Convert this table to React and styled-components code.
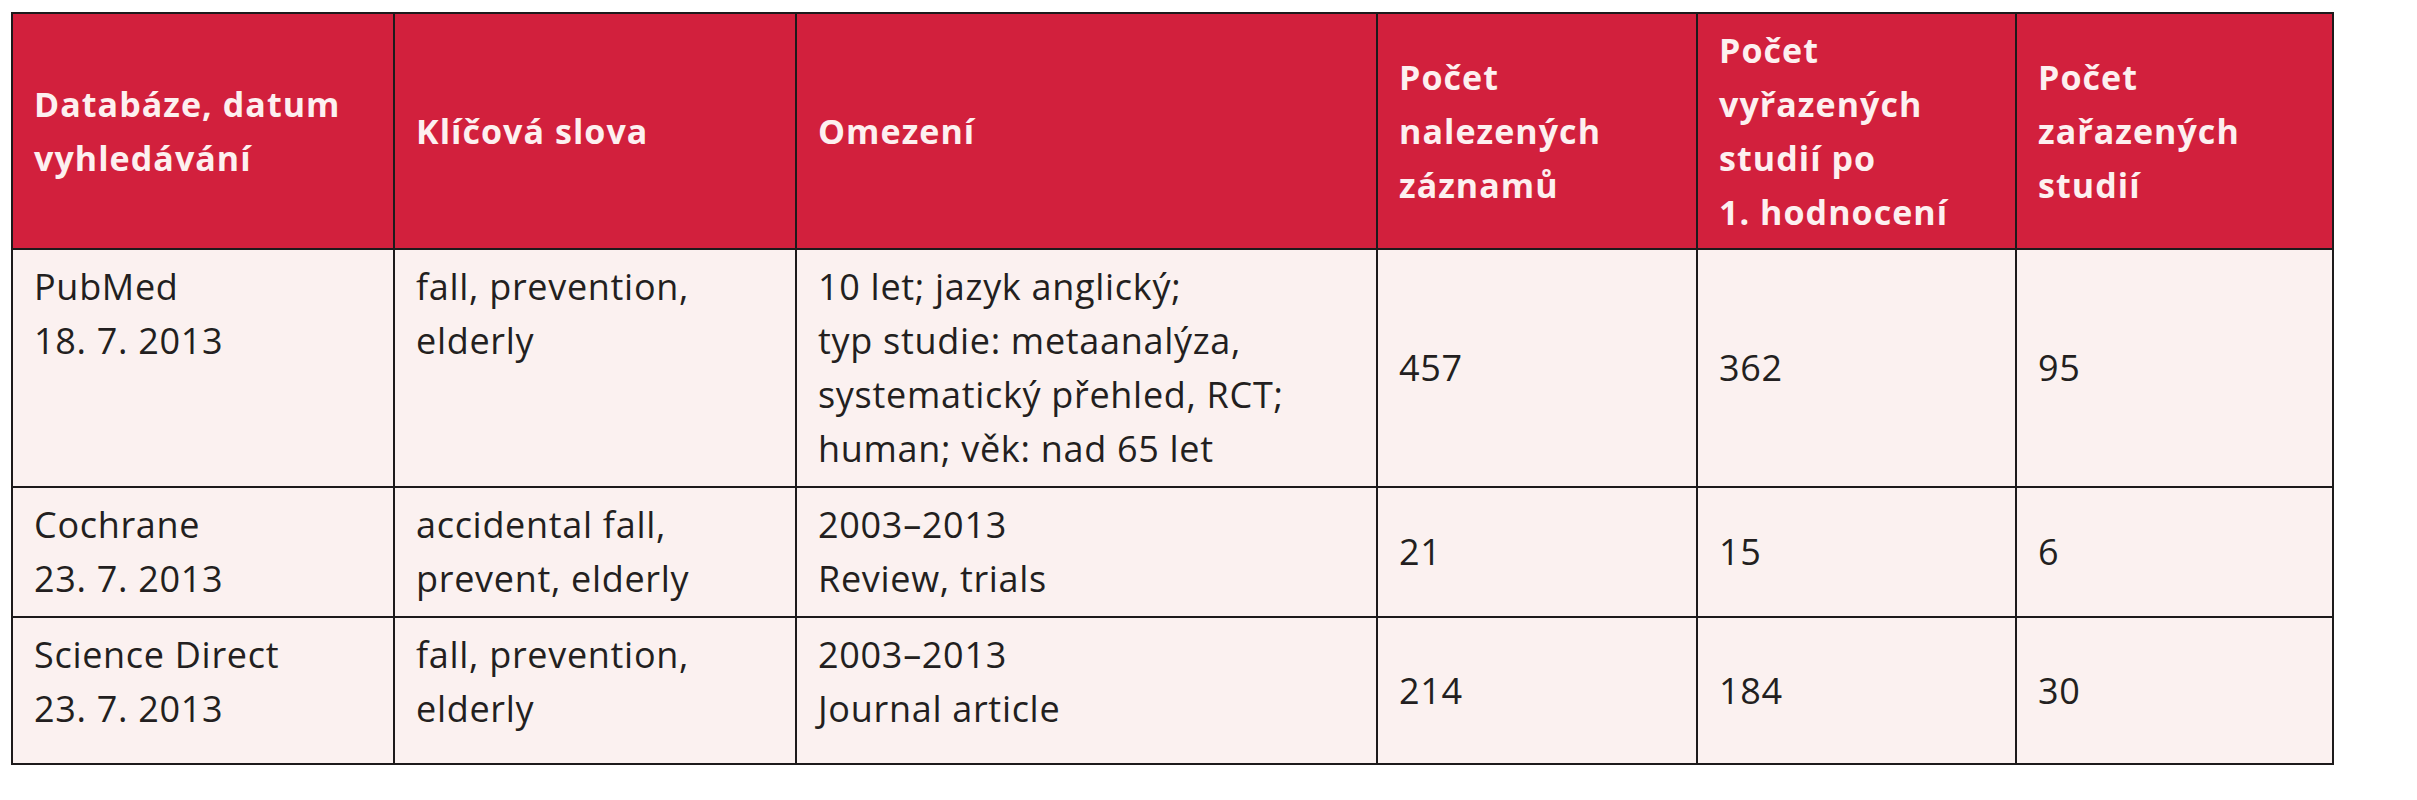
import React from "react";
import styled, { createGlobalStyle } from "styled-components";

const Global = createGlobalStyle`
  html, body {
    margin: 0;
    padding: 0;
    background: #ffffff;
  }
  body {
    font-family: "Open Sans", "Liberation Sans", sans-serif;
  }
`;

const Page = styled.div`
  padding: 12px 0 0 11px;
`;

const Table = styled.table`
  border-collapse: collapse;
  table-layout: fixed;
  width: 2323px;
  border: 2px solid #1d1a1b;
`;

const Row = styled.tr`
  height: ${(p) => p.$h}px;
`;

const HeadCell = styled.th`
  background: #d2203d;
  color: #fdf0f0;
  font-family: "Open Sans", "Liberation Sans", sans-serif;
  font-weight: 700;
  font-size: 34px;
  line-height: 54px;
  letter-spacing: 1.05px;
  text-align: left;
  vertical-align: middle;
  padding: 0 16px 0 21px;
  border: 2px solid #1d1a1b;
  white-space: nowrap;
`;

const Cell = styled.td`
  background: #fbf1f0;
  color: #231f20;
  font-family: "Open Sans", "Liberation Sans", sans-serif;
  font-weight: 400;
  font-size: 36px;
  line-height: 54px;
  letter-spacing: 0.7px;
  text-align: left;
  vertical-align: ${(p) => (p.$mid ? "middle" : "top")};
  padding: 10px 16px 10px 21px;
  border: 2px solid #1d1a1b;
  white-space: nowrap;
`;

const widths = [382, 402, 581, 320, 319, 317];

const head = [
  ["Databáze, datum", "vyhledávání"],
  ["Klíčová slova"],
  ["Omezení"],
  ["Počet", "nalezených", "záznamů"],
  ["Počet", "vyřazených", "studií po", "1. hodnocení"],
  ["Počet", "zařazených", "studií"],
];

const rows = [
  {
    h: 237,
    cells: [
      ["PubMed", "18. 7. 2013"],
      ["fall, prevention,", "elderly"],
      [
        "10 let; jazyk anglický;",
        "typ studie: metaanalýza,",
        "systematický přehled, RCT;",
        "human; věk: nad 65 let",
      ],
      ["457"],
      ["362"],
      ["95"],
    ],
  },
  {
    h: 126,
    cells: [
      ["Cochrane", "23. 7. 2013"],
      ["accidental fall,", "prevent, elderly"],
      ["2003–2013", "Review, trials"],
      ["21"],
      ["15"],
      ["6"],
    ],
  },
  {
    h: 147,
    cells: [
      ["Science Direct", "23. 7. 2013"],
      ["fall, prevention,", "elderly"],
      ["2003–2013", "Journal article"],
      ["214"],
      ["184"],
      ["30"],
    ],
  },
];

const Lines = ({ lines }) =>
  lines.map((l, i) => (
    <React.Fragment key={i}>
      {i > 0 && <br />}
      {l}
    </React.Fragment>
  ));

export default function App() {
  return (
    <>
      <Global />
      <Page>
        <Table>
          <colgroup>
            {widths.map((w, i) => (
              <col key={i} style={{ width: w }} />
            ))}
          </colgroup>
          <thead>
            <Row $h={236}>
              {head.map((h, i) => (
                <HeadCell key={i}>
                  <Lines lines={h} />
                </HeadCell>
              ))}
            </Row>
          </thead>
          <tbody>
            {rows.map((r, ri) => (
              <Row key={ri} $h={r.h}>
                {r.cells.map((c, ci) => (
                  <Cell key={ci} $mid={ci >= 3}>
                    <Lines lines={c} />
                  </Cell>
                ))}
              </Row>
            ))}
          </tbody>
        </Table>
      </Page>
    </>
  );
}
